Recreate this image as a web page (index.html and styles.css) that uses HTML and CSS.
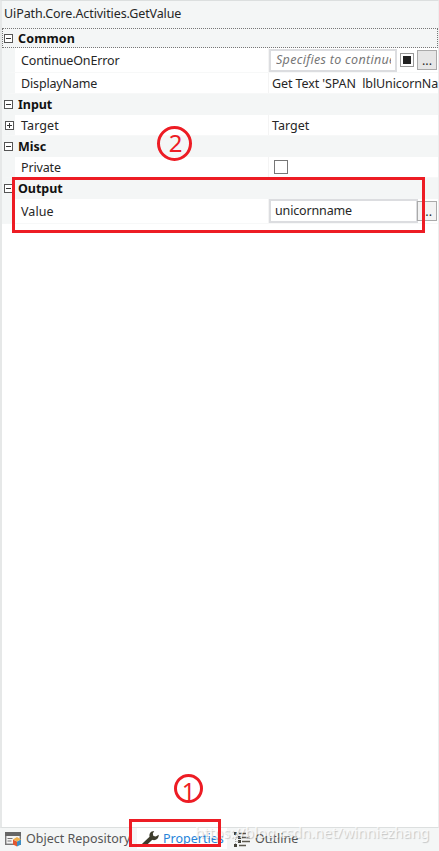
FILE: index.html
```html
<!DOCTYPE html>
<html>
<head>
    <meta charset="utf-8">
    <title>Properties</title>
    <link rel="stylesheet" href="styles.css">
</head>
<body>
    <div class="panel">
        <div class="title">UiPath.Core.Activities.GetValue</div>

        <div class="category selected"><i class="toggle"></i><b>Common</b></div>
        <div class="row tall">
            <div class="name">ContinueOnError</div>
            <div class="value">
                <div class="input placeholder"><span>Specifies to continue</span></div>
                <div class="check filled"></div>
                <div class="more">...</div>
            </div>
        </div>
        <div class="row">
            <div class="name">DisplayName</div>
            <div class="value text">Get Text 'SPAN&nbsp; lblUnicornName'</div>
        </div>

        <div class="category"><i class="toggle"></i><b>Input</b></div>
        <div class="row">
            <i class="toggle plus"></i>
            <div class="name wider">Target</div>
            <div class="value text wider">Target</div>
        </div>

        <div class="category"><i class="toggle"></i><b>Misc</b></div>
        <div class="row">
            <div class="name">Private</div>
            <div class="value"><div class="check"></div></div>
        </div>

        <div class="category"><i class="toggle"></i><b>Output</b></div>
        <div class="row tall">
            <div class="name wider">Value</div>
            <div class="value">
                <div class="input wide"><span>unicornname</span></div>
                <div class="more light">...</div>
            </div>
        </div>
    </div>

    <div class="tabs">
        <div class="tab repository">
            <svg width="17" height="16" viewBox="0 0 17 16">
                <rect x="0.7" y="1.7" width="14.6" height="11.6" fill="#f4f4f4" stroke="#777" stroke-width="1.4"/>
                <rect x="0" y="1" width="16" height="4" fill="#666"/>
                <path d="M2.5 7.5h5M2.5 10h4" stroke="#777" stroke-width="1.2"/>
                <path d="M8 8.5l4 2v5l-4-2z" fill="#e2572f"/>
                <path d="M12 10.5l4-2v5l-4 2z" fill="#3d8ec4"/>
                <path d="M8 8.5l4-2.5 4 2.5-4 2z" fill="#efb04c"/>
            </svg>
            <span>Object Repository</span>
        </div>
        <div class="tab active">
            <svg width="17" height="16" viewBox="0 0 17 16">
                <path d="M1.5 14.2L10 6.2" stroke="#3d3c2c" stroke-width="4"/>
                <path d="M12.2 0C8.6 0 6.6 3 7.8 6.2L10.6 9C14 9.8 16.7 7.6 16.8 3.8L13.8 5.6 11.4 5 10.8 2.6z" fill="#3d3c2c"/>
            </svg>
            <span>Properties</span>
        </div>
        <div class="tab outline">
            <svg width="17" height="16" viewBox="0 0 17 16">
                <path d="M0 1h3v3H0zM4 5h3v3H4zM4 9h3v3H4zM0 13h3v3H0z" fill="#45433a"/>
                <path d="M5 2.5h7M8 6.5h8M8 10.5h8M5 14.5h7" stroke="#5b584e" stroke-width="1.4"/>
                <path d="M1.5 4v9M1.5 6.5h3M1.5 10.5h3" stroke="#aaa" fill="none" stroke-dasharray="1 1"/>
            </svg>
            <span>Outline</span>
        </div>
    </div>

    <div class="watermark">https://blog.csdn.net/winniezhang</div>

    <div class="mark mark-output"></div>
    <div class="mark mark-properties"></div>
    <div class="step step-one">1</div>
    <div class="step step-two">2</div>
</body>
</html>
```

FILE: styles.css
```css
* {
    box-sizing: border-box;
}
body {
    margin: 0;
    width: 439px;
    height: 851px;
    overflow: hidden;
    position: relative;
    background: #f4f6f6;
    color: #262626;
    font-family: "Noto Sans", "Open Sans", sans-serif;
    font-size: 12.5px;
    white-space: nowrap;
}
.panel {
    height: 828px;
    border: 1px solid #dcdfdf;
    border-left-width: 2px;
    border-left-color: #e6e8e8;
    border-right-color: #ededed;
    background: #fff;
}
.title {
    height: 27px;
    padding-left: 2px;
    line-height: 25px;
    letter-spacing: -0.1px;
    background: #f4f6f6;
}
.category {
    display: flex;
    align-items: center;
    height: 21px;
    background: #f4f6f6;
    color: #111;
}
.category b {
    margin-left: -1px;
    letter-spacing: -0.05px;
}
.category.selected {
    height: 20px;
    border: 1px dotted #777;
}
.category.selected .toggle {
    margin-left: 1px;
}
.category.selected b {
    letter-spacing: 0.15px;
}
.toggle {
    position: relative;
    flex: none;
    width: 9px;
    height: 9px;
    margin: 0 6px 0 2px;
    border: 1px solid #555;
    background: #fff;
}
.toggle::before, .toggle.plus::after {
    content: "";
    position: absolute;
    top: 3px;
    left: 1px;
    width: 5px;
    height: 1px;
    background: #333;
}
.toggle.plus::after {
    transform: rotate(90deg);
}
.row {
    display: flex;
    align-items: center;
    height: 21px;
    border-left: 13px solid #f4f6f6;
    border-bottom: 1px solid #f7f8f8;
}
.row.tall {
    height: 25px;
}
.row .toggle.plus {
    margin: 0 0 0 -10px;
}
.name {
    flex: none;
    width: 253px;
    padding-left: 6px;
    letter-spacing: -0.15px;
}
.name.wider {
    letter-spacing: 0.1px;
}
.row .toggle.plus + .name {
    width: 254px;
    padding-left: 7px;
}
.value {
    display: flex;
    align-items: center;
    flex: 1;
    align-self: stretch;
    min-width: 0;
    overflow: hidden;
    border-left: 1px solid #f4f4f4;
}
.value.text {
    padding-left: 3px;
    letter-spacing: -0.1px;
}
.value.text.wider {
    letter-spacing: 0;
}
.input {
    flex: none;
    width: 128px;
    height: 23px;
    padding: 0 4px 0 5px;
    border: 2px solid #dcdde0;
    line-height: 18px;
}
.input span {
    display: block;
    overflow: hidden;
}
.input.wide {
    width: 149px;
    height: 24px;
    padding-left: 4px;
    line-height: 19px;
    letter-spacing: -0.15px;
}
.placeholder {
    color: #777;
    font-style: italic;
    letter-spacing: 0.3px;
}
.check {
    flex: none;
    width: 14px;
    height: 14px;
    margin-left: 5px;
    border: 1px solid #777;
    background: #fff;
}
.check.filled {
    margin: 0 3px;
    border-color: #999;
    background: #222;
    box-shadow: inset 0 0 0 2px #fff;
}
.more {
    flex: none;
    width: 20px;
    height: 20px;
    border: 1px solid #aaa;
    background: #e6e6e6;
    line-height: 20px;
    text-align: center;
}
.more.light {
    margin-left: -1px;
    background: #f3f3f3;
}
.tabs {
    display: flex;
    height: 23px;
    color: #555;
}
.tab {
    display: flex;
    align-items: center;
    height: 21px;
}
.tab svg {
    flex: none;
    margin-right: 4px;
}
.repository {
    width: 137px;
    padding-left: 5px;
}
.active {
    width: 90px;
    padding-left: 5px;
    background: #fff;
    color: #2683d9;
}
.outline {
    padding-left: 7px;
}
.watermark {
    position: absolute;
    top: 822px;
    left: 195px;
    color: rgba(255, 255, 255, 0.75);
    font-size: 14.5px;
    text-shadow: 1px 1px 1px rgba(0, 0, 0, 0.2);
}
.mark {
    position: absolute;
    border: 3px solid #ed1c24;
}
.mark-output {
    top: 177px;
    left: 12px;
    width: 413px;
    height: 56px;
}
.mark-properties {
    top: 819px;
    left: 129px;
    width: 92px;
    height: 28px;
}
.step {
    position: absolute;
    border: 3px solid #ed1c24;
    border-radius: 50%;
    color: #ed1c24;
    text-align: center;
}
.step-one {
    top: 774px;
    left: 174px;
    width: 29px;
    height: 29px;
    font-size: 24px;
    line-height: 27px;
}
.step-two {
    top: 126px;
    left: 157px;
    width: 35px;
    height: 35px;
    padding-left: 2px;
    font-size: 24px;
    line-height: 27px;
}
```
